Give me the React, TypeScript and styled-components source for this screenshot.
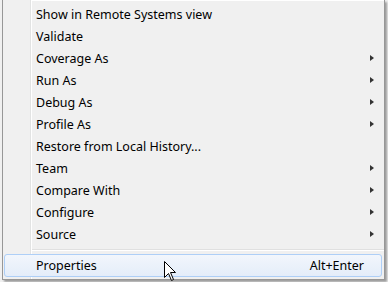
import React from 'react';
import styled, { createGlobalStyle } from 'styled-components';

const GlobalStyle = createGlobalStyle`
  html, body {
    margin: 0;
    padding: 0;
    background: #f0f0f0;
    overflow: hidden;
  }
  body {
    width: 388px;
    height: 282px;
    font-family: "Noto Sans", "Noto Sans CJK SC", sans-serif;
  }
`;

const Menu = styled.div`
  box-sizing: border-box;
  width: 383px;
  margin-left: 2px;
  padding: 0 0 2px 0;
  background-color: #f0f0f0;
  background-image: linear-gradient(
    to right,
    transparent 27px,
    #e2e3e3 27px,
    #e2e3e3 28px,
    #ffffff 28px,
    #ffffff 29px,
    transparent 29px
  );
  border-left: 1px solid #979797;
  border-right: 1px solid #979797;
  border-bottom: 1px solid #979797;
  box-shadow: 2px 2px 2px rgba(0, 0, 0, 0.35);
`;

const TopEdge = styled.div`
  height: 1px;
  margin: 0 0 2px 29px;
  background: #ffffff;
`;

const Item = styled.div<{ $hover?: boolean }>`
  position: relative;
  box-sizing: border-box;
  height: ${(p) => (p.$hover ? '23px' : '22px')};
  margin: 0 2px 0 1px;
  padding: 0 7px 0 31px;
  display: flex;
  align-items: center;
  border: 1px solid ${(p) => (p.$hover ? '#aecff7' : 'transparent')};
  border-radius: 3px;
  background: ${(p) =>
    p.$hover ? 'linear-gradient(to bottom, #f2f6fc, #e4edf9)' : 'transparent'};
  font-size: 12.5px;
  color: #000;
  white-space: nowrap;
`;

const Label = styled.span`
  flex: 1;
`;

const Shortcut = styled.span`
  margin-right: 10px;
`;

const Arrow = styled.span`
  width: 0;
  height: 0;
  border-left: 4px solid #333;
  border-top: 3.5px solid transparent;
  border-bottom: 3.5px solid transparent;
`;

const Separator = styled.div`
  height: 1px;
  margin: 4px 0 3px 29px;
  border-top: 1px solid #e0e0e0;
  background: #ffffff;
`;

const Cursor = styled.svg`
  position: absolute;
  left: 159px;
  top: 6px;
`;

type Entry = { label: string; sub?: boolean };

const items: Entry[] = [
  { label: 'Show in Remote Systems view' },
  { label: 'Validate' },
  { label: 'Coverage As', sub: true },
  { label: 'Run As', sub: true },
  { label: 'Debug As', sub: true },
  { label: 'Profile As', sub: true },
  { label: 'Restore from Local History...' },
  { label: 'Team', sub: true },
  { label: 'Compare With', sub: true },
  { label: 'Configure', sub: true },
  { label: 'Source', sub: true },
];

const App: React.FC = () => {
  return (
    <>
      <GlobalStyle />
      <Menu>
        <TopEdge />
        {items.map((it) => (
          <Item key={it.label}>
            <Label>{it.label}</Label>
            {it.sub && <Arrow />}
          </Item>
        ))}
        <Separator />
        <Item $hover>
          <Label>Properties</Label>
          <Shortcut>Alt+Enter</Shortcut>
          <Cursor width="13" height="21" viewBox="0 0 13 21">
            <path
              d="M0.5 0.5 L0.5 16.5 L4.5 12.5 L7.5 19.5 L9.5 18.5 L6.5 11.5 L11.5 11.5 Z"
              fill="#fff"
              stroke="#000"
              strokeWidth="1"
              strokeLinejoin="miter"
            />
          </Cursor>
        </Item>
      </Menu>
    </>
  );
};

export default App;
